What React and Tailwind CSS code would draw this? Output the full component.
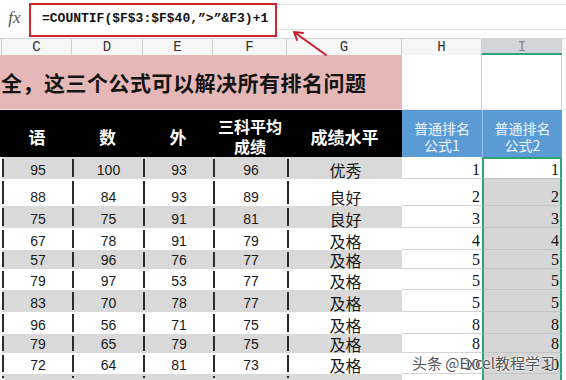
import React from "react";

const rows = [
  ["95", "100", "93", "96", "优秀", "1", "1", "h-[22px]"],
  ["88", "84", "93", "89", "良好", "2", "2", "h-[27px]"],
  ["75", "75", "91", "81", "良好", "3", "3", "h-[22px]"],
  ["67", "78", "91", "79", "及格", "4", "4", "h-[22px]"],
  ["57", "96", "76", "77", "及格", "5", "5", "h-[19px]"],
  ["79", "97", "53", "77", "及格", "5", "5", "h-[21px]"],
  ["83", "70", "78", "77", "及格", "5", "5", "h-[22px]"],
  ["96", "56", "71", "75", "及格", "8", "8", "h-[22px]"],
  ["79", "65", "79", "75", "及格", "8", "8", "h-[19px]"],
  ["72", "64", "81", "73", "及格", "10", "10", "h-[21px]"],
];

const widths = ["w-[70px]", "w-[71px]", "w-[70px]", "w-[74px]", "w-[115px]"];
const letters = ["C", "D", "E", "F", "G", "H"];
const letterWidths = ["w-[70px]", "w-[71px]", "w-[70px]", "w-[74px]", "w-[115px]", "w-[80px]"];

const sans = "font-['Liberation_Sans','Noto_Sans_CJK_SC',sans-serif]";
const cjk = "font-['Noto_Sans_CJK_SC',sans-serif]";

function DataCell({ w, gray, children, isCjk }) {
  return (
    <div className={`flex ${w} items-end ${gray ? "bg-[#d9d9d9]" : "bg-white"}`}>
      <div className="my-[2px] w-[2px] self-stretch bg-[#2b2b2b]" />
      <span
        className={`flex-1 pb-[1px] text-center text-[#1a1a1a] ${
          isCjk ? `${cjk} text-[16px] leading-[16px]` : `${sans} text-[14px] leading-[15px]`
        }`}
      >
        {children}
      </span>
    </div>
  );
}

export default function App() {
  return (
    <div className="relative h-[380px] w-[566px] overflow-hidden bg-white">
      {/* formula bar */}
      <div className="flex h-[39px] border-b border-[#d6d6d6] bg-white">
        <div className="flex w-[29px] items-center justify-center pb-[2px] font-['Liberation_Serif',serif] text-[17px] italic text-[#555]">
          fx
        </div>
        <div className="mt-[3px] flex h-[34px] w-[248px] items-center border-2 border-[#d0262d] pb-[3px] pl-[11px] font-['Liberation_Mono',monospace] text-[13px] font-semibold text-[#111]">
          =COUNTIF($F$3:$F$40,”&gt;”&amp;F3)+1
        </div>
        <div className="mt-[4px] h-[26px] flex-1 border-y border-[#e3e3e3]" />
      </div>

      {/* column letters */}
      <div className="flex h-[16px] bg-[#f6f6f6] font-['Liberation_Mono',monospace] text-[14px] leading-[16px] text-[#333]">
        <div className="w-[2px] border-r border-[#cfcfcf]" />
        {letters.map((l, i) => (
          <div key={l} className={`${letterWidths[i]} border-r border-[#cfcfcf] text-center`}>
            {l}
          </div>
        ))}
        <div className="w-[80px] border-b-2 border-[#2ea37a] bg-[#d2d5da] text-center text-[#888]">I</div>
        <div className="flex-1" />
      </div>

      {/* title row */}
      <div className="flex h-[54px]">
        <div className={`flex w-[402px] items-center bg-[#e5b8b7] pl-[1px] pt-[1px] ${cjk} text-[21px] font-bold tracking-[0.5px] text-[#141414]`}>
          全，这三个公式可以解决所有排名问题
        </div>
        <div className="w-[80px] border-r border-[#d2d2d2]" />
        <div className="w-[80px] border-r border-[#d2d2d2]" />
        <div className="flex-1" />
      </div>
      <div className="h-[1px] bg-[#e8e8e8]" />

      {/* header row */}
      <div className="flex h-[47px]">
        <div className={`flex w-[402px] bg-black ${cjk} text-white`}>
          <div className="w-[2px]" />
          {["语", "数", "外"].map((t, i) => (
            <div key={t} className={`${widths[i]} flex items-center justify-center pt-[6px] text-[17px] font-bold`}>
              {t}
            </div>
          ))}
          <div className="flex w-[74px] flex-col items-center justify-center pt-[5px] text-[16px] font-bold leading-[20px]">
            <span>三科平均</span>
            <span>成绩</span>
          </div>
          <div className="flex w-[115px] items-center justify-center pt-[6px] text-[17px] font-bold">成绩水平</div>
        </div>
        <div className={`flex w-[80px] flex-col items-center justify-center bg-[#5b9bd5] pt-[6px] ${cjk} text-[14px] leading-[17px] text-[#eef4fb]`}>
          <span>普通排名</span>
          <span>公式1</span>
        </div>
        <div className={`flex w-[80px] flex-col items-center justify-center border-l border-[#9cc2e8] bg-[#5b9bd5] pt-[6px] ${cjk} text-[14px] leading-[17px] text-[#eef4fb]`}>
          <span>普通排名</span>
          <span>公式2</span>
        </div>
        <div className="flex-1" />
      </div>

      {/* data rows */}
      {rows.map((r, idx) => {
        const gray = idx % 2 === 0;
        return (
          <div key={idx} className={`flex ${r[7]}`}>
            <div className="w-[2px]" />
            {r.slice(0, 5).map((v, i) => (
              <DataCell key={i} w={widths[i]} gray={gray} isCjk={i === 4}>
                {v}
              </DataCell>
            ))}
            <div className="flex w-[80px] items-end justify-end border-b border-[#d4d4d4] bg-white pr-[2px] font-['Liberation_Serif',serif] text-[16px] leading-[16px] text-[#111]">
              {r[5]}
            </div>
            <div
              className={`flex w-[80px] items-end justify-end border-x-2 border-b border-x-[#2ea37a] border-b-[#c4c4c4] pr-[1px] font-['Liberation_Serif',serif] text-[16px] leading-[16px] text-[#111] ${
                idx === 0 ? "border-t-2 border-t-[#2ea37a] bg-white" : "bg-[#d6d6d6]"
              }`}
            >
              {r[6]}
            </div>
            <div className="flex-1" />
          </div>
        );
      })}
      <div className="flex h-[6px]">
        <div className="w-[2px]" />
        {widths.map((w, i) => (
          <DataCell key={i} w={w} gray={true}>
            {""}
          </DataCell>
        ))}
        <div className="w-[80px] bg-white" />
        <div className="w-[80px] border-x-2 border-[#2ea37a] bg-[#d6d6d6]" />
        <div className="flex-1" />
      </div>

      {/* annotation arrow */}
      <svg className="absolute left-0 top-0" width="566" height="80" viewBox="0 0 566 80">
        <path d="M326 55 L294 32 M294 32 L303 33 M294 32 L297 40" stroke="#c8202a" strokeWidth="2" fill="none" strokeLinecap="round" />
      </svg>

      {/* watermark */}
      <div className={`absolute left-[412px] top-[353px] ${cjk} text-[15px] leading-[20px] text-[#555] [text-shadow:0_0_2px_#fff,0_0_2px_#fff]`}>
        头条 @Excel教程学习
      </div>
    </div>
  );
}
